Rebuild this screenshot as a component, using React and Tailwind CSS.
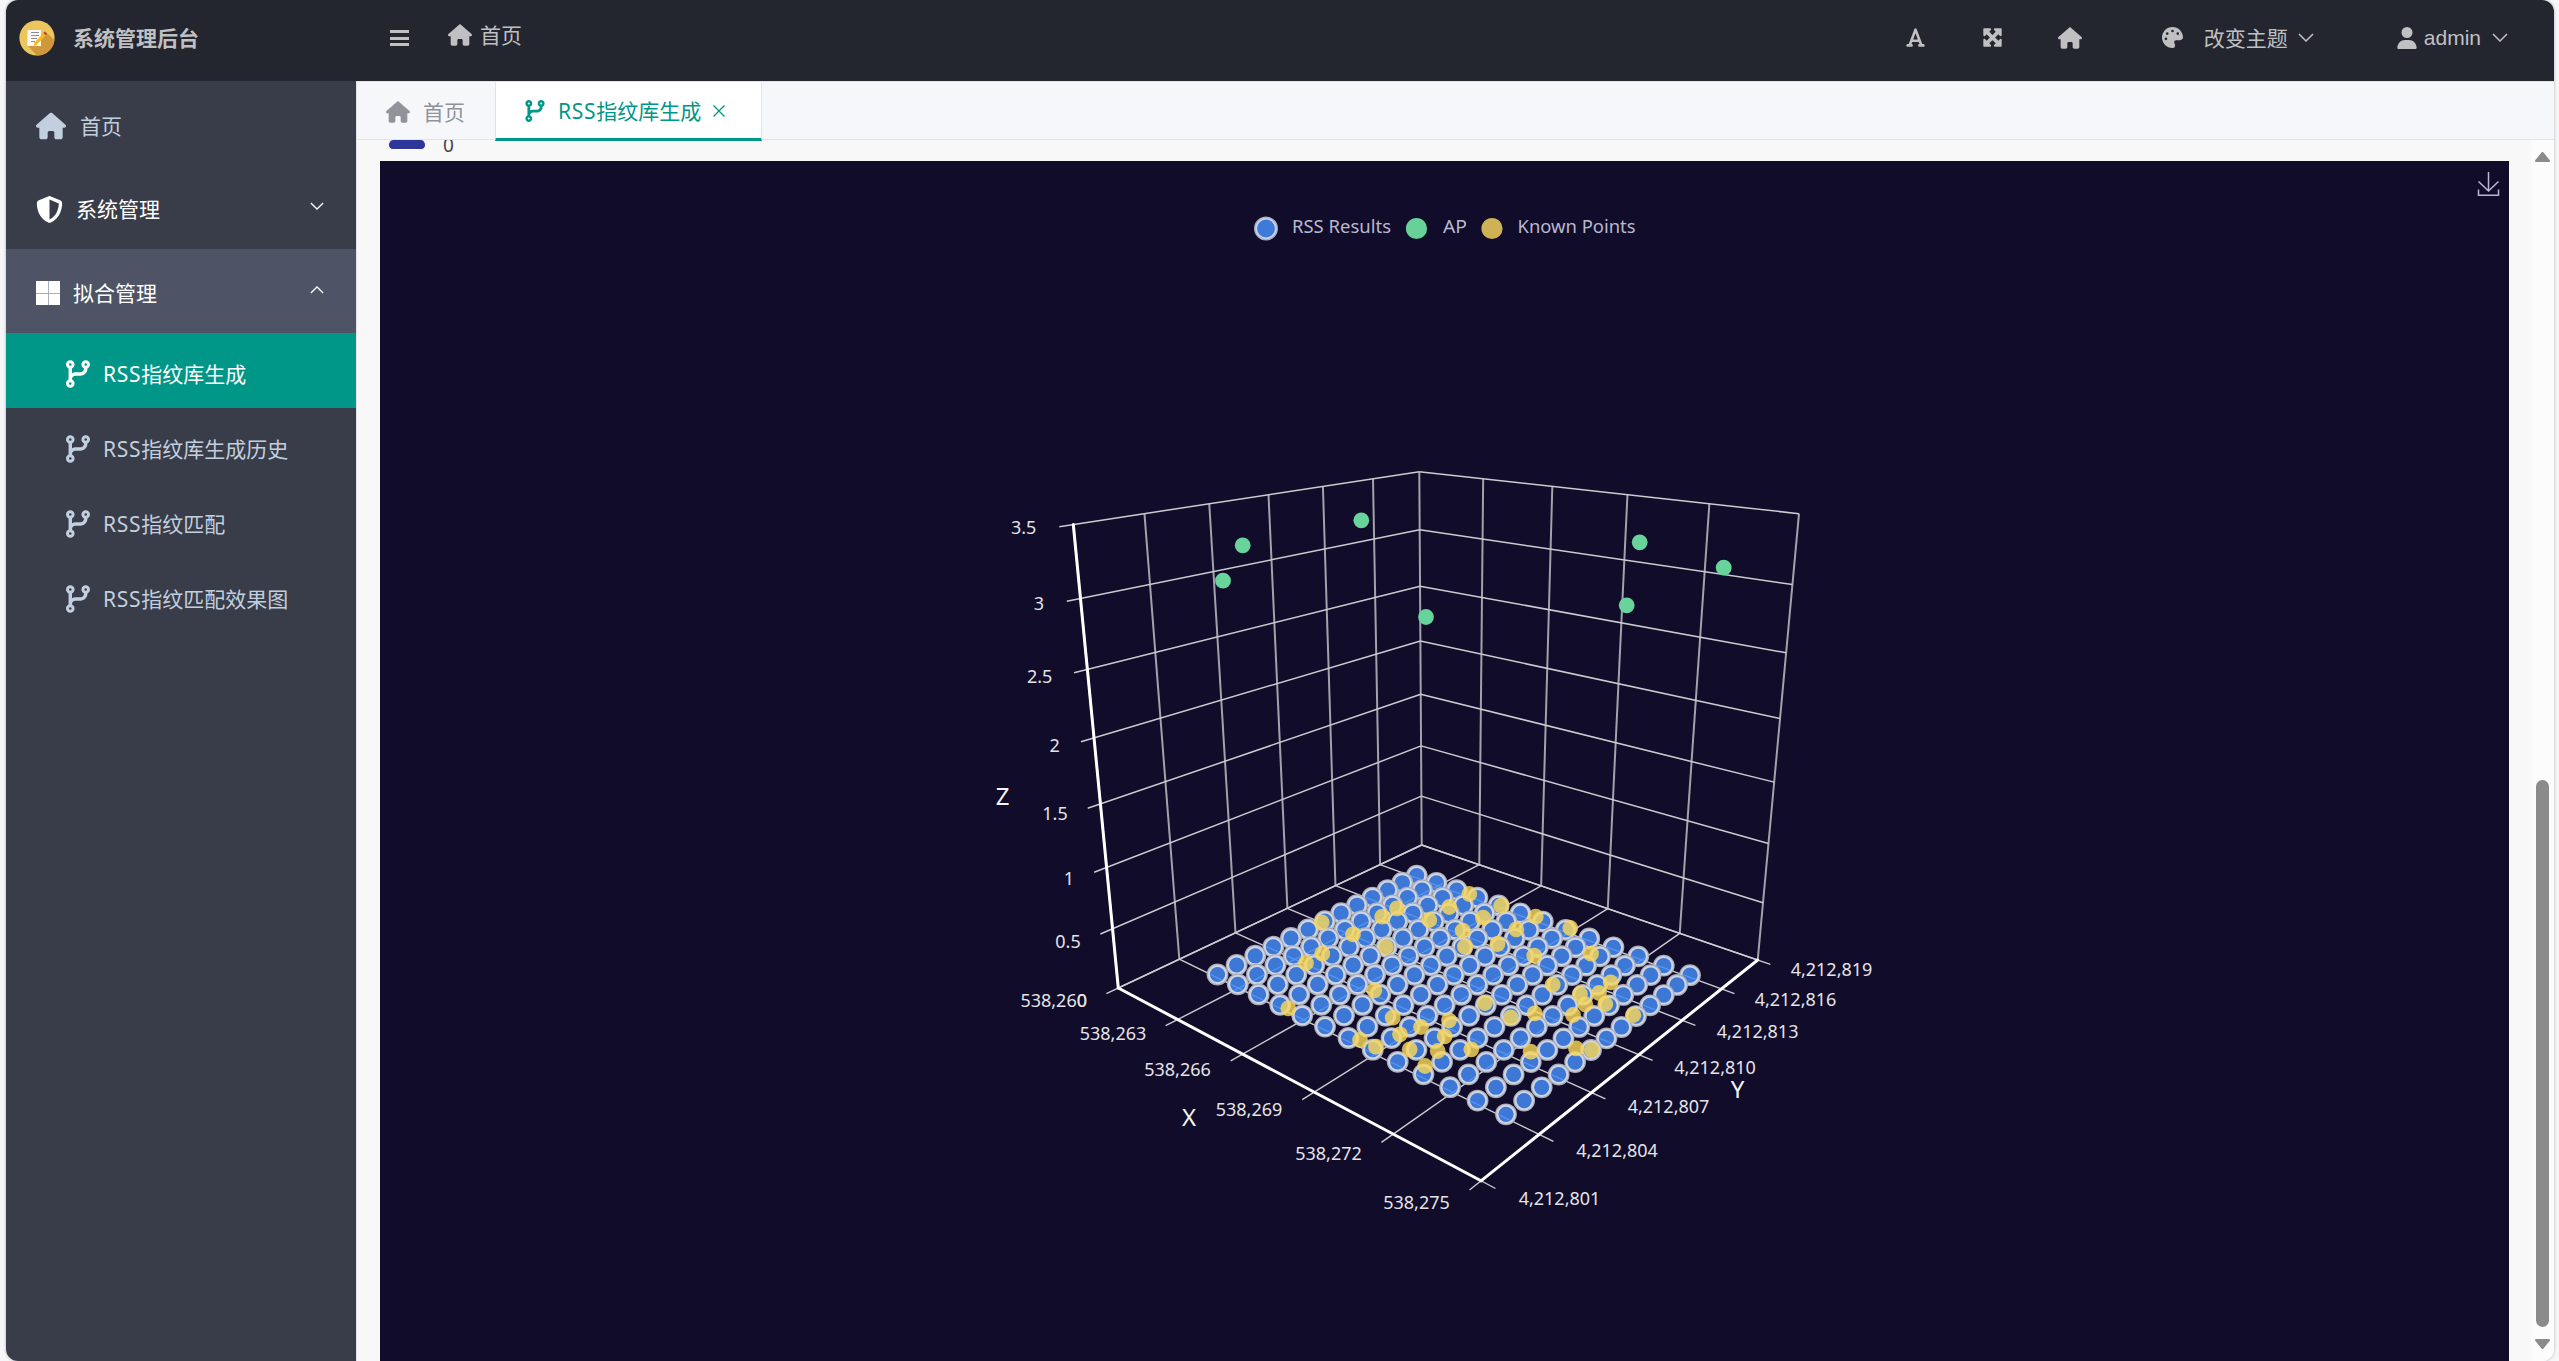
import React from "react";
import {
  FaHouse,
  FaShieldHalved,
  FaCodeBranch,
  FaFont,
  FaMaximize,
  FaPalette,
  FaUser,
} from "react-icons/fa6";

/* ---------- perspective helpers ---------- */

// Projective map of the unit square onto the quad p00, p10, p11, p01.
function quadMap(p00, p10, p11, p01) {
  const dx1 = p10[0] - p11[0];
  const dx2 = p01[0] - p11[0];
  const dx3 = p00[0] - p10[0] + p11[0] - p01[0];
  const dy1 = p10[1] - p11[1];
  const dy2 = p01[1] - p11[1];
  const dy3 = p00[1] - p10[1] + p11[1] - p01[1];
  const det = dx1 * dy2 - dx2 * dy1;
  const g = (dx3 * dy2 - dx2 * dy3) / det;
  const h = (dx1 * dy3 - dx3 * dy1) / det;
  const a = p10[0] - p00[0] + g * p10[0];
  const b = p01[0] - p00[0] + h * p01[0];
  const d = p10[1] - p00[1] + g * p10[1];
  const e = p01[1] - p00[1] + h * p01[1];
  return (u, v) => {
    const w = g * u + h * v + 1;
    return [(a * u + b * v + p00[0]) / w, (d * u + e * v + p00[1]) / w];
  };
}

const LEFT = [1118.3, 988];
const FRONT = [1481, 1180.8];
const RIGHT = [1757.7, 960];
const BACK = [1421.7, 845];
const LEFT_TOP = [1073.3, 524.5];
const BACK_TOP = [1419.3, 471.7];
const RIGHT_TOP = [1799, 513.7];

const floor = quadMap(LEFT, FRONT, RIGHT, BACK);
const leftWall = quadMap(LEFT, BACK, BACK_TOP, LEFT_TOP);
const rightWall = quadMap(BACK, RIGHT, RIGHT_TOP, BACK_TOP);
const dotPlane = quadMap([1217.5, 974.5], [1506, 1114.3], [1690, 975.2], [1416.7, 875.6]);

const range = (n) => Array.from({ length: n }, (_, i) => i);
const TICK = -0.031;

const floorLines = [
  ...range(6).map((i) => [floor(i / 5, TICK), floor(i / 5, 1)]),
  ...range(7).map((j) => [floor(0, j / 6), floor(1 - TICK, j / 6)]),
];
const levelLines = range(8).flatMap((k) => [
  [leftWall(k === 0 ? 0 : TICK, k / 7), leftWall(1, k / 7)],
  [rightWall(0, k / 7), rightWall(1, k / 7)],
]);
const uprightLines = [
  ...range(7).map((j) => [leftWall(j / 6, 0), leftWall(j / 6, 1)]),
  ...range(5).map((i) => [rightWall((i + 1) / 5, 0), rightWall((i + 1) / 5, 1)]),
];
const axisLines = [
  [LEFT, LEFT_TOP],
  [LEFT, FRONT],
  [FRONT, RIGHT],
];

/* ---------- data ---------- */

const rssPoints = range(13)
  .flatMap((i) => range(13).map((j) => dotPlane(i / 12, j / 12)))
  .sort((p, q) => p[1] - q[1]);

const knownPoints = [
  [1321.7, 922.3], [1306, 963], [1322.3, 953.7], [1353, 934.3], [1382.3, 916.7],
  [1397, 908.3], [1429.3, 920], [1449.3, 907], [1469.3, 894], [1501.3, 905.7],
  [1483, 917.7], [1462.7, 930.7], [1465, 946.7], [1386, 947], [1497.5, 944],
  [1374.3, 990.3], [1288.3, 1008.3], [1392.7, 1017.7], [1400, 1034.3], [1360, 1040],
  [1376, 1046.7], [1409.7, 1049.3], [1421, 1027], [1449, 1020.3], [1444.7, 1036.3],
  [1437.7, 1051], [1471.3, 1049.3], [1425, 1066], [1485, 1003], [1510.7, 1017.3],
  [1516.3, 929.3], [1535.7, 916.7], [1570.3, 928], [1534.3, 955.7], [1591, 953.7],
  [1610.7, 982.3], [1552.7, 984.7], [1580, 994], [1599, 993], [1585.3, 1004.3],
  [1605.3, 1004], [1573, 1015], [1534.7, 1013.3], [1633.3, 1015], [1530.7, 1051.7],
  [1576, 1048.3], [1591.7, 1050],
];

const apPoints = [
  [1242.7, 545.3], [1223, 580.7], [1361.3, 520.3], [1426, 617],
  [1626.7, 605.3], [1639.7, 542.3], [1723.7, 567.7],
];

const tickLabels = [
  ["3.5", 1023.7, 528.3], ["3", 1039, 604], ["2.5", 1039.7, 677], ["2", 1054.7, 746],
  ["1.5", 1055, 813.5], ["1", 1069, 878.5], ["0.5", 1068, 941.5], ["0", 1082, 1001],
  ["538,260", 1053.7, 1001], ["538,263", 1113, 1033.5], ["538,266", 1177.5, 1070],
  ["538,269", 1249, 1109.5], ["538,272", 1328.5, 1154], ["538,275", 1416.5, 1203],
  ["4,212,801", 1559.5, 1199], ["4,212,804", 1617, 1151], ["4,212,807", 1668.5, 1107],
  ["4,212,810", 1715, 1068], ["4,212,813", 1757.6, 1032], ["4,212,816", 1795.5, 999.5],
  ["4,212,819", 1831.5, 969.5],
];

const axisNames = [["Z", 1002.5, 796.5], ["X", 1189, 1118], ["Y", 1737.5, 1090]];

/* ---------- chart ---------- */

function Lines({ items, ...rest }) {
  return (
    <g {...rest}>
      {items.map(([p, q], i) => (
        <line key={i} x1={p[0]} y1={p[1]} x2={q[0]} y2={q[1]} />
      ))}
    </g>
  );
}

function ScatterChart() {
  return (
    <svg
      viewBox="380 161 2129 1200"
      className="block h-[1200px] w-[2129px] bg-[#100c2a] font-['Noto_Sans','Open_Sans',sans-serif]"
    >
      <g fill="none" stroke="#b9b8ce" strokeWidth="1.5">
        <path d="M2488.5 172V191M2478.500 181.500l10 9.500 10-9.500M2478.500 189.500V195.300H2498.500V189.500" />
      </g>

      <circle cx="1266" cy="228.5" r="11" fill="#3e7ad8" stroke="#a7abba" strokeWidth="2" />
      <circle cx="1266" cy="228.5" r="9.8" fill="none" stroke="#c3d0ee" strokeWidth="1.8" />
      <circle cx="1416.5" cy="228.5" r="10.6" fill="#68d099" />
      <circle cx="1492" cy="228.5" r="10.6" fill="#cfb256" />
      <g fill="#b9b8ce" className="text-[18.5px]">
        <text x="1292" y="233" textLength="99" lengthAdjust="spacingAndGlyphs">RSS Results</text>
        <text x="1443" y="233" textLength="24" lengthAdjust="spacingAndGlyphs">AP</text>
        <text x="1517.5" y="233" textLength="118" lengthAdjust="spacingAndGlyphs">Known Points</text>
      </g>

      <Lines items={uprightLines} stroke="#a3a1aa" strokeWidth="2" />
      <Lines items={levelLines} stroke="#cccbd0" strokeWidth="1.5" />
      <Lines items={floorLines} stroke="#cccbd0" strokeWidth="1.4" />
      <Lines items={axisLines} stroke="#ffffff" strokeWidth="3" strokeLinecap="round" />

      {rssPoints.map(([x, y], i) => (
        <g key={i}>
          <circle cx={x} cy={y} r="10.9" fill="#a9acb6" />
          <circle cx={x} cy={y} r="9.7" fill="#ced4e4" />
          <circle cx={x} cy={y} r="7.6" fill="#3e78d6" />
        </g>
      ))}
      <clipPath id="dot-fills">
        {rssPoints.map(([x, y], i) => (
          <circle key={i} cx={x} cy={y} r="7.2" />
        ))}
      </clipPath>
      <g clipPath="url(#dot-fills)">
        <Lines items={floorLines} stroke="#5c9cf8" strokeWidth="1.3" opacity="0.8" />
      </g>

      {knownPoints.map(([x, y], i) => (
        <circle key={i} cx={x} cy={y} r="7.9" fill="#f8d75c" fillOpacity="0.82" />
      ))}
      {apPoints.map(([x, y], i) => (
        <circle key={i} cx={x} cy={y} r="7.9" fill="#68d39a" />
      ))}

      <g fill="#e4e3e8" textAnchor="middle" className="text-[18px]">
        {tickLabels.map(([label, x, y]) => (
          <text key={label} x={x} y={y + 6}>{label}</text>
        ))}
      </g>
      <g fill="#f4f4f6" textAnchor="middle" className="text-[24px]">
        {axisNames.map(([label, x, y]) => (
          <text key={label} x={x} y={y + 8}>{label}</text>
        ))}
      </g>
    </svg>
  );
}

/* ---------- small icons ---------- */

function Chevron({ className, up }) {
  return (
    <svg viewBox="0 0 16 9" fill="none" stroke="currentColor" strokeWidth="1.5" className={className}>
      <path d={up ? "M1 8L8 1l7 7" : "M1 1l7 7 7-7"} />
    </svg>
  );
}

function Logo() {
  return (
    <svg viewBox="0 0 36 36" className="size-9 shrink-0">
      <defs>
        <clipPath id="logo-disc">
          <circle cx="18" cy="18" r="17.6" />
        </clipPath>
      </defs>
      <g clipPath="url(#logo-disc)">
        <rect width="36" height="36" fill="#ecc65c" />
        <path d="M9 26L26 11.500L40 24V40H22z" fill="#cf983a" />
      </g>
      <path d="M8.500 10H22V26H8.500z" fill="#fbfaf6" />
      <path d="M12 12.500h8M12 15.500h8M12 18.500h6M12 21.500h4" stroke="#8f8f8f" strokeWidth="1" />
      <path d="M15.500 22.500L24.500 13l2.300 2.200L17.500 25l-3 .8z" fill="#f8b91e" />
      <path d="M24.500 13l1.300-1.400 2.300 2.200-1.300 1.400z" fill="#c8384a" />
    </svg>
  );
}

/* ---------- page ---------- */

const subItems = ["指纹库生成", "指纹库生成历史", "指纹匹配", "指纹匹配效果图"];

function RssLabel({ children, className }) {
  return (
    <span className={className}>
      <span className="tracking-[0.7px]">RSS</span>
      {children}
    </span>
  );
}

function Sidebar() {
  return (
    <nav className="w-[350px] shrink-0 bg-[#393d49] text-white">
      <div className="flex h-[84px] items-center pt-[5px] pl-[30px] text-[#c2cfde]">
        <FaHouse className="size-[30px]" />
        <span className="ml-[14px]">首页</span>
      </div>
      <div className="flex h-[84px] items-center pt-[4px] pl-[30px]">
        <FaShieldHalved className="size-[27px]" />
        <span className="ml-[13px]">系统管理</span>
        <Chevron className="mr-[32px] mb-[6px] ml-auto h-[8px] w-[14px]" />
      </div>
      <div className="flex h-[84px] items-center bg-[#4e5465] pt-[4px] pl-[30px]">
        <span className="grid h-6 w-[24px] grid-cols-2 gap-px bg-[#a9adb8]">
          <i className="bg-white" />
          <i className="bg-white" />
          <i className="bg-white" />
          <i className="bg-white" />
        </span>
        <span className="ml-[13px]">拟合管理</span>
        <Chevron up className="mr-[32px] mb-[6px] ml-auto h-[8px] w-[14px]" />
      </div>
      {subItems.map((label, i) => (
        <div
          key={label}
          className={
            i === 0
              ? "flex h-[75px] items-center bg-[#009688] pt-[6px] pl-[60px] text-white"
              : "flex h-[75px] items-center pt-[6px] pl-[60px] text-[#c2cfde]"
          }
        >
          <FaCodeBranch className="h-[28px] w-[24px]" />
          <RssLabel className="ml-[13px]">{label}</RssLabel>
        </div>
      ))}
    </nav>
  );
}

function Header() {
  return (
    <header className="flex h-[81px] shrink-0 items-center bg-[#23262e] pb-[5px] text-[#c0c0c3]">
      <div className="flex w-[384px] items-center pl-[13px]">
        <Logo />
        <span className="ml-[18px] font-bold">系统管理后台</span>
      </div>
      <div className="flex h-4 w-[19px] flex-col justify-between">
        <i className="h-[3px] bg-current" />
        <i className="h-[3px] bg-current" />
        <i className="h-[3px] bg-current" />
      </div>
      <div className="mb-[7px] ml-[39px] flex items-center">
        <FaHouse className="size-[24px]" />
        <span className="ml-[8px]">首页</span>
      </div>
      <div className="mb-[1px] ml-auto flex items-center pr-[46px]">
        <FaFont className="size-[21px]" />
        <FaMaximize className="ml-[56px] size-[21px]" />
        <FaHouse className="ml-[55px] size-[24px]" />
        <FaPalette className="ml-[80px] size-[21px]" />
        <span className="ml-[21px]">改变主题</span>
        <Chevron className="ml-[10px] h-[9px] w-[16px]" />
        <FaUser className="ml-[83px] h-[22px] w-[20px]" />
        <span className="ml-[7px] font-['Liberation_Sans',sans-serif]">admin</span>
        <Chevron className="ml-[11px] h-[9px] w-[16px]" />
      </div>
    </header>
  );
}

function Tabs() {
  return (
    <div className="relative z-10 flex h-[59px] shrink-0 border-y border-[#e2e3ea] bg-[#f6f7fb]">
      <div className="flex w-[138px] items-center pt-[2px] pl-[29px] text-[#909399]">
        <FaHouse className="size-[24px]" />
        <span className="ml-[13px]">首页</span>
      </div>
      <div className="-mb-[2px] flex w-[267px] items-center border-x border-b-[3px] border-x-[#e2e3ea] border-b-[#009688] bg-white pt-[2px] pl-[29px] text-[#009688]">
        <FaCodeBranch className="h-[22px] w-[20px]" />
        <RssLabel className="ml-[13px]">指纹库生成</RssLabel>
        <svg viewBox="0 0 12 12" fill="none" stroke="currentColor" strokeWidth="1.3" className="ml-[12px] size-[12px]">
          <path d="M.5.500l11 11M11.500.500l-11 11" />
        </svg>
      </div>
    </div>
  );
}

export default function App() {
  return (
    <div className="h-[1361px] w-[2559px] overflow-hidden bg-[#f6f6f8] pr-[5px] pl-[6px] font-['Noto_Sans','Noto_Sans_CJK_SC',sans-serif] text-[21px] leading-[30px]">
      <div className="flex h-full flex-col overflow-hidden rounded-[12px] shadow-[0_0_3px_#aaaaaa]">
        <Header />
        <div className="flex min-h-0 flex-1">
          <Sidebar />
          <main className="flex min-w-0 flex-1 flex-col border-l border-[#e2e3ea]">
            <Tabs />
            <div className="flex min-h-0 flex-1 bg-[#f8f8f8]">
              <div className="w-[2174px] pl-[23px]">
                <div className="flex h-[21px] items-start overflow-hidden pl-[8px]">
                  <span className="h-[10px] w-[38px] rounded-[5px] border border-t-0 border-white bg-[#2f3699]" />
                  <span className="-mt-[10px] ml-[17px] text-[19px] text-[#444444]">0</span>
                </div>
                <ScatterChart />
              </div>
              <div className="flex flex-1 flex-col items-center bg-[#fcfcfc] pt-[12px] pb-[12px]">
                <svg viewBox="0 0 15 10" className="h-[10px] w-[15px]">
                  <path d="M7.500 1L14 9H1z" fill="#8b8b8b" stroke="#8b8b8b" strokeWidth="2" strokeLinejoin="round" />
                </svg>
                <div className="mt-auto h-[547px] w-[13px] rounded-full bg-[#8b8b8b]" />
                <svg viewBox="0 0 15 10" className="mt-[12px] h-[10px] w-[15px]">
                  <path d="M7.500 9L14 1H1z" fill="#8b8b8b" stroke="#8b8b8b" strokeWidth="2" strokeLinejoin="round" />
                </svg>
              </div>
            </div>
          </main>
        </div>
      </div>
    </div>
  );
}
